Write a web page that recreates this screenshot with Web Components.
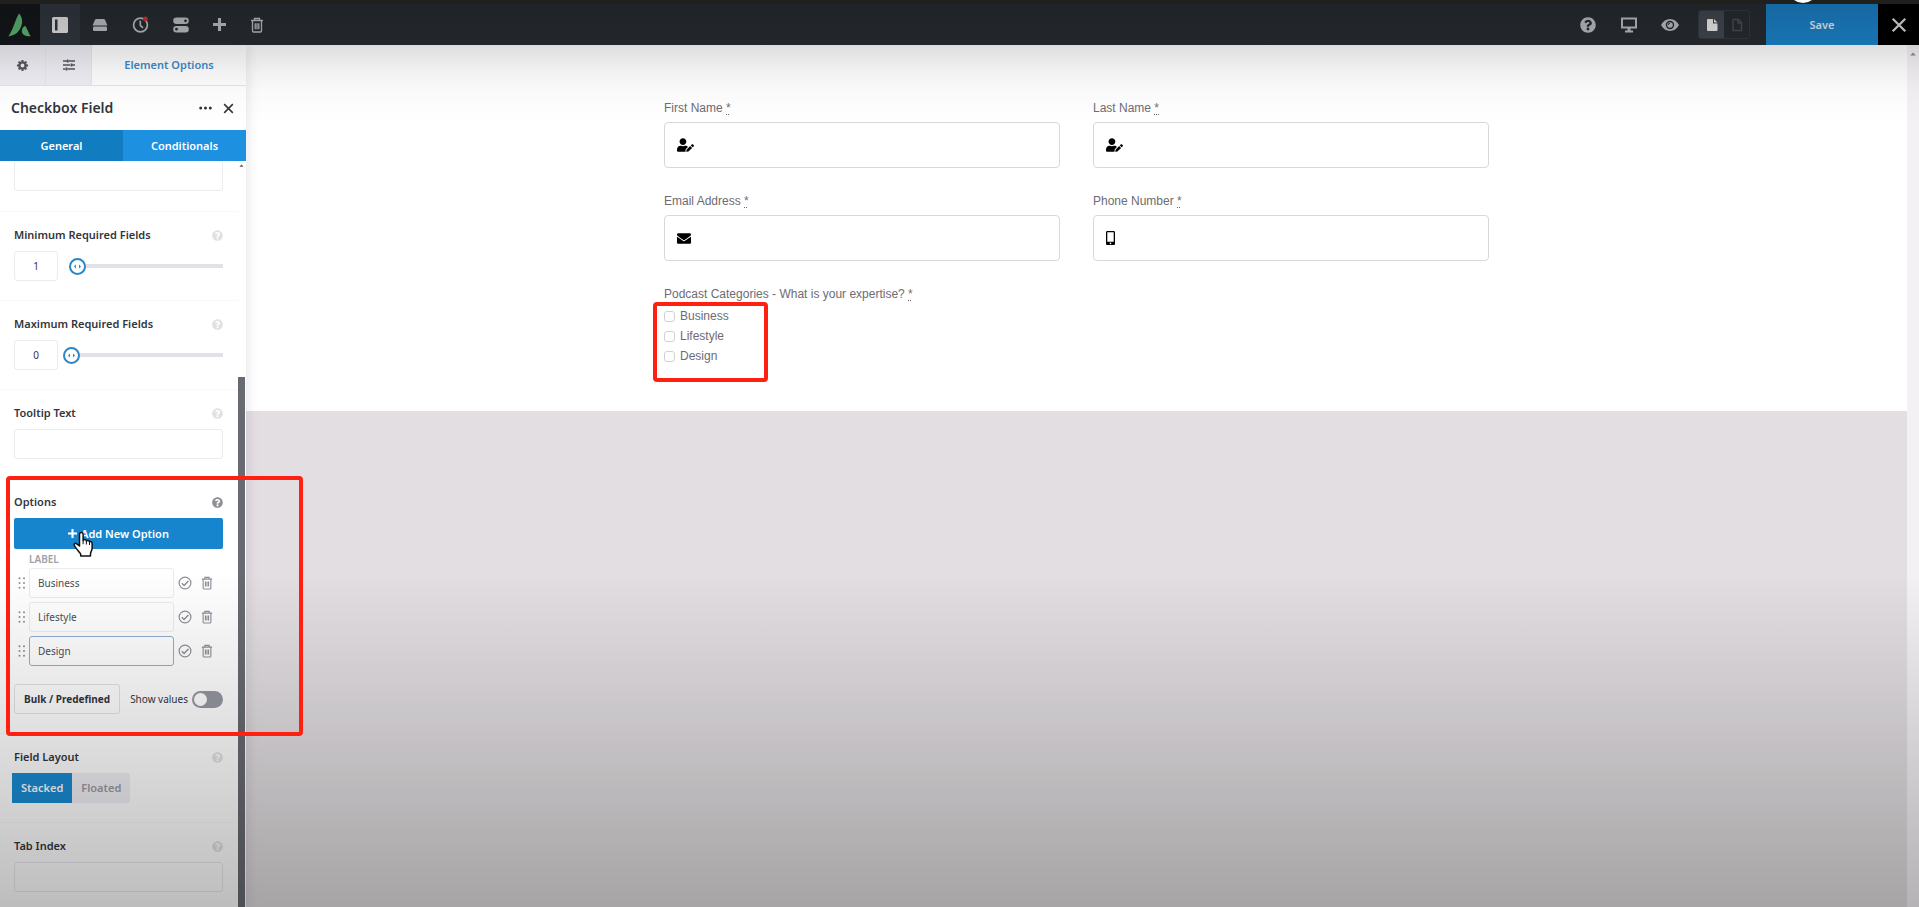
<!DOCTYPE html>
<html lang="en">
<head>
<meta charset="utf-8">
<title>Avada Live</title>
<style>
html, body { height: 100%; }
body {
  margin: 0;
  overflow: hidden;
  font-family: "Noto Sans", "Open Sans", sans-serif;
  font-size: 11px;
  line-height: 18px;
  color: #33353d;
}
</style>
</head>
<body>
<live-builder></live-builder>

<script>
const RESET = `
  *, *::before, *::after { box-sizing: border-box; }
  button, input { font: inherit; color: inherit; margin: 0; }
  button { border: 0; padding: 0; background: none; cursor: pointer; white-space: nowrap; }
  h2, h3 { margin: 0; font: inherit; font-weight: 600; }
`;

const ICONS = {
  logo: ['0 0 24 24', '<path fill="#5cb572" d="M11.200.5C13.800 3.500 15 8 13.500 12.600 11.700 18.100 8 22.600.3 23.400 3.600 18.800 5.800 12.500 7.400 8.200 8.500 5 9.800 2.500 11.200.5zM16.900 12.700c2.400 2 3.300 7.400 6 10.600-5.800.4-9.300-2-9.100-5.600.1-2.100 1.500-4 3.100-5z"/>'],
  panel: ['0 0 16 16', '<path fill="currentColor" fill-rule="evenodd" d="M1.500 0h13A1.500 1.500 0 0 1 16 1.500v13a1.500 1.500 0 0 1-1.500 1.500h-13A1.500 1.500 0 0 1 0 14.500v-13A1.500 1.500 0 0 1 1.500 0zM3 2.500v11h2.500v-11z"/>'],
  drive: ['0 0 16 16', '<path fill="currentColor" d="M4.400 2h7.200c.7 0 1.200.4 1.500 1l2.300 5.500H.6L2.900 3c.3-.6.800-1 1.500-1z"/><rect fill="currentColor" x="1" y="9.500" width="14" height="4.500" rx="1.200"/>'],
  clock: ['0 0 16 16', '<circle cx="8" cy="8.500" r="6.500" fill="none" stroke="currentColor" stroke-width="1.600"/><path d="M7.800 4.500v4.300l2.500 2.400" fill="none" stroke="currentColor" stroke-width="1.500"/><circle cx="12.600" cy="2.800" r="2.300" fill="#c9363b"/>'],
  toggles: ['0 0 16 16', '<path fill="currentColor" fill-rule="evenodd" d="M3.500.5h9a3.300 3.300 0 0 1 0 6.600h-9a3.300 3.300 0 0 1 0-6.600zm9 1.900a1.400 1.400 0 1 0 0 2.800 1.400 1.400 0 0 0 0-2.800zM3.500 8.900h9a3.300 3.300 0 0 1 0 6.600h-9a3.300 3.300 0 0 1 0-6.600zm0 1.900a1.400 1.400 0 1 0 0 2.800 1.400 1.400 0 0 0 0-2.800z"/>'],
  plus: ['0 0 12 12', '<path fill="currentColor" d="M4.600 0h2.800v4.600H12v2.800H7.400V12H4.600V7.400H0V4.600h4.600z"/>'],
  trash: ['0 0 14 16', '<path d="M1 3.500h12M4.500 3.500v-2h5v2M2.500 3.500v10.200c0 .7.500 1.300 1.200 1.300h6.600c.7 0 1.200-.6 1.200-1.300V3.500M5.200 6.200v6M7 6.200v6M8.800 6.200v6" fill="none" stroke="currentColor" stroke-width="1.300"/>'],
  help: ['0 0 512 512', '<path fill="currentColor" d="M504 256c0 137-111 248-248 248S8 393 8 256C8 119 119 8 256 8s248 111 248 248zM262.700 90c-54.500 0-89.300 23-116.600 63.800-3.500 5.200-2.300 12.400 2.700 16.200l34.700 26.300c5.200 4 12.600 3 16.700-2.100 17.900-22.700 30.100-35.800 57.300-35.800 20.400 0 45.700 13.100 45.700 33 0 15-12.400 22.600-32.500 33.900C247.100 238.500 216 255 216 296v4c0 6.600 5.400 12 12 12h56c6.600 0 12-5.400 12-12v-1.300c0-28.500 83.200-29.700 83.200-106.700 0-58-60.200-102-116.500-102zM256 338c-25.400 0-46 20.600-46 46s20.600 46 46 46 46-20.600 46-46-20.600-46-46-46z"/>'],
  desktop: ['0 0 18 16', '<path fill="none" stroke="currentColor" stroke-width="2" d="M2 1.500h14v9H2z"/><path fill="currentColor" d="M7.500 11h3v2.500H13V15.500H5V13.500h2.500z"/>'],
  eye: ['0 0 18 14', '<path fill="currentColor" fill-rule="evenodd" d="M9 1c3.800 0 7 2.300 9 6-2 3.700-5.200 6-9 6S2 10.700 0 7c2-3.700 5.200-6 9-6zm0 1.800a4.200 4.200 0 1 0 0 8.400 4.200 4.200 0 0 0 0-8.400z"/><circle cx="9" cy="7" r="2.800" fill="currentColor"/><path d="M7.300 6.800A1.700 1.700 0 0 1 9 5.200" stroke="#24282c" fill="none"/>'],
  page: ['0 0 12 14', '<path fill="currentColor" d="M2 1h5v4.500h4.500V12a1 1 0 0 1-1 1H2a1 1 0 0 1-1-1V2a1 1 0 0 1 1-1zM8 1l3.500 3.500H8z"/>'],
  pageLine: ['0 0 12 14', '<path fill="none" stroke="currentColor" stroke-width="1.500" d="M2 1.500h5.500l3 3V12.500H2zM7 1.500v3.500h3.500"/>'],
  close: ['0 0 14 14', '<path d="M1.500 1.500l11 11m0-11l-11 11" fill="none" stroke="currentColor" stroke-width="2"/>'],
  gear: ['0 0 14 14', '<circle cx="7" cy="7" r="3.400" fill="none" stroke="currentColor" stroke-width="2.600"/><path stroke="currentColor" stroke-width="2.200" d="M7 1v2M7 11v2M1 7h2M11 7h2M2.800 2.800l1.300 1.300M9.900 9.900l1.300 1.300M2.800 11.200l1.300-1.300M9.900 4.100l1.300-1.300"/>'],
  sliders: ['0 0 14 12', '<path fill="none" stroke="currentColor" stroke-width="1.300" d="M1 2h4M7 2h6M1 6h7M10 6h3M1 10h2.500M5.500 10H13"/><path stroke="currentColor" stroke-width="1.800" d="M5.800.5v3M9.500 4.500v3M4.500 8.500v3"/>'],
  dots: ['0 0 13 4', '<g fill="currentColor"><circle cx="1.700" cy="2" r="1.500"/><circle cx="6.500" cy="2" r="1.500"/><circle cx="11.300" cy="2" r="1.500"/></g>'],
  grip: ['0 0 8 12', '<g fill="currentColor"><circle cx="1.500" cy="1.200" r="1"/><circle cx="6" cy="1.200" r="1"/><circle cx="1.500" cy="6" r="1"/><circle cx="6" cy="6" r="1"/><circle cx="1.500" cy="10.800" r="1"/><circle cx="6" cy="10.800" r="1"/></g>'],
  check: ['0 0 14 14', '<circle cx="7" cy="7" r="5.900" fill="none" stroke="currentColor" stroke-width="1.200"/><path d="M3.800 7.200l2.300 2.300 4.300-4.500" fill="none" stroke="currentColor" stroke-width="1.500"/>'],
  up: ['0 0 6 4', '<path fill="currentColor" d="M3 .5L5.800 3.500H.2z"/>'],
  user: ['0 0 640 512', '<path fill="currentColor" d="M224 256c70.700 0 128-57.300 128-128S294.700 0 224 0 96 57.300 96 128s57.300 128 128 128zm89.600 32h-16.700c-22.200 10.200-46.900 16-72.900 16s-50.600-5.800-72.900-16h-16.700C60.200 288 0 348.200 0 422.400V464c0 26.500 21.500 48 48 48h274.900c-2.400-6.800-3.400-14-2.600-21.300l6.800-60.900 1.200-11.100 7.900-7.900 77.300-77.300c-24.500-27.700-60-45.500-99.900-45.500zm45.300 145.300l-6.800 61c-1.100 10.200 7.500 18.800 17.600 17.600l60.900-6.800 137.900-137.900-71.700-71.700zM633 268.900L595.100 231c-9.300-9.300-24.500-9.300-33.800 0l-41.900 41.900 71.800 71.700 41.800-41.800c9.300-9.400 9.300-24.500 0-33.900z"/>'],
  mail: ['0 64 512 384', '<path fill="currentColor" d="M502.300 190.800c3.900-3.100 9.700-.2 9.700 4.700V400c0 26.500-21.500 48-48 48H48c-26.500 0-48-21.500-48-48V195.600c0-5 5.700-7.800 9.700-4.700 22.400 17.400 52.100 39.500 154.100 113.600 21.100 15.400 56.700 47.800 92.200 47.600 35.700.3 72-32.800 92.300-47.600 102-74.100 131.600-96.300 154-113.700zM256 320c23.200.4 56.600-29.200 73.400-41.400 132.700-96.300 142.800-104.700 173.400-128.700 5.800-4.500 9.200-11.500 9.200-18.900v-19c0-26.500-21.500-48-48-48H48c-26.500 0-48 21.500-48 48v19c0 7.400 3.400 14.300 9.200 18.900 30.600 23.900 40.700 32.400 173.400 128.700 16.800 12.200 50.200 41.800 73.400 41.400z"/>'],
  phone: ['0 0 9 14', '<path fill="currentColor" fill-rule="evenodd" d="M1.300 0h6.400C8.400 0 9 .6 9 1.300v11.400c0 .7-.6 1.300-1.300 1.300H1.300C.6 14 0 13.400 0 12.700V1.300C0 .6.600 0 1.300 0zm0 1.300v9.400h6.400V1.300zm3.200 10.300a.8.800 0 1 0 0 1.600.8.800 0 0 0 0-1.600z"/>'],
  hand: ['0 0 20 26', '<path fill="#fff" stroke="#111" stroke-width="1.500" stroke-linejoin="round" d="M6.500 15V3.200a1.800 1.800 0 0 1 3.600 0V9.500c.4-1.400 3.200-1.200 3.300.5.700-1 3-.7 3.100.9.800-.7 2.600-.2 2.600 1.500v5.200c0 2.100-1.600 3.300-1.600 5.100V25H7.700v-1.900C6.300 21 3.300 18.100 1.400 14.500c-.9-1.700 1-2.800 2.300-1.600z"/><path d="M10.100 9.500v3.700M13.400 10v3.500M16.500 11v3" stroke="#111" fill="none"/>']
};

class UiIcon extends HTMLElement {
  constructor() {
    super();
    this.attachShadow({ mode: 'open' });
  }

  connectedCallback() {
    const [box, shape] = ICONS[this.getAttribute('name')];
    const w = this.getAttribute('w') || 16;
    const h = this.getAttribute('h') || w;
    this.shadowRoot.innerHTML = `
      <style>
        :host { display: inline-flex; flex: none; }
        svg { display: block; }
      </style>
      <svg viewBox="${box}" width="${w}" height="${h}" aria-hidden="true">${shape}</svg>`;
  }
}
customElements.define('ui-icon', UiIcon);

// red outline drawn over a part of the page
customElements.define('call-out', class extends HTMLElement {
  constructor() {
    super();
    this.attachShadow({ mode: 'open' }).innerHTML = `
      <style>
        :host {
          display: block;
          box-sizing: border-box;
          position: absolute;
          z-index: 6;
          border: 4px solid #ff2012;
          border-radius: 4px;
          pointer-events: none;
        }
      </style>`;
  }
});

customElements.define('top-toolbar', class extends HTMLElement {
  constructor() {
    super();
    this.attachShadow({ mode: 'open' }).innerHTML = `
      <style>
        ${RESET}
        :host {
          display: flex;
          justify-content: space-between;
          height: 45px;
          border-top: 4px solid #282826;
          background: #282d32;
          color: #bfc2c6;
        }
        .group { display: flex; }
        button { padding: 0 12px; display: flex; align-items: center; justify-content: center; }
        .logo { padding: 0 8px; background: #14171a; }
        .active { background: #323841; color: #e6e6e6; }
        .view > button { width: 41px; padding: 0; }
        .status {
          display: flex;
          align-self: center;
          height: 29px;
          margin: 0 16px 0 8px;
          border: 1px solid #363c43;
          border-radius: 3px;
          overflow: hidden;
        }
        .status button { width: 25px; padding: 0; color: #4a5057; }
        .status .on { background: #434951; color: #f2f2f2; }
        .view > .save { width: 112px; background: #1c84cc; color: #e9f2f9; font-weight: 600; }
        .close { background: #000; color: #ddd; }
      </style>
      <div class="group">
        <button class="logo" aria-label="Avada"><ui-icon name="logo" w="24"></ui-icon></button>
        <button class="active" aria-label="Toggle sidebar"><ui-icon name="panel"></ui-icon></button>
        <button aria-label="Library"><ui-icon name="drive"></ui-icon></button>
        <button aria-label="History"><ui-icon name="clock" w="17"></ui-icon></button>
        <button aria-label="Preferences"><ui-icon name="toggles"></ui-icon></button>
        <button aria-label="Add"><ui-icon name="plus" w="13"></ui-icon></button>
        <button aria-label="Clear layout"><ui-icon name="trash" w="14" h="16"></ui-icon></button>
      </div>
      <div class="group view">
        <button aria-label="Help"><ui-icon name="help"></ui-icon></button>
        <button aria-label="Responsive"><ui-icon name="desktop" w="18" h="16"></ui-icon></button>
        <button aria-label="Preview"><ui-icon name="eye" w="18" h="14"></ui-icon></button>
        <div class="status">
          <button class="on" aria-label="Published"><ui-icon name="page" w="12" h="14"></ui-icon></button>
          <button aria-label="Draft"><ui-icon name="pageLine" w="12" h="14"></ui-icon></button>
        </div>
        <button class="save">Save</button>
        <button class="close" aria-label="Close"><ui-icon name="close"></ui-icon></button>
      </div>`;
  }
});

const FIELD = `
  input[type=text] {
    height: 30px;
    min-width: 0;
    border: 1px solid rgba(60, 60, 90, .1);
    border-radius: 3px;
    background: transparent;
    font-size: 10px;
    outline: 0;
  }
`;

customElements.define('option-row', class extends HTMLElement {
  constructor() {
    super();
    this.attachShadow({ mode: 'open' });
  }

  connectedCallback() {
    const label = this.getAttribute('label');
    const type = this.getAttribute('type');
    const value = this.getAttribute('value');
    let control = '<slot></slot>';
    let title = `<h3>${label}</h3>`;

    if (type == 'text') {
      title = `<label for="field">${label}</label>`;
      control = '<input id="field" type="text">';
    }
    if (type == 'range') {
      title = `<label for="field">${label}</label>`;
      control = `
        <div class="range">
          <input id="field" type="text" value="${value}">
          <input type="range" min="0" max="24" value="${value}" aria-label="${label}">
        </div>`;
    }

    this.shadowRoot.innerHTML = `
      <style>
        ${RESET}
        ${FIELD}
        :host {
          display: block;
          padding: 14px 15px 19px 14px;
          border-top: 1px solid rgba(60, 60, 90, .03);
        }
        header { display: flex; align-items: center; justify-content: space-between; margin-bottom: 7px; }
        label, h3 { font-weight: 600; }
        .help { display: flex; color: #e2e0e3; }
        :host([active]) .help { color: #8f9094; }
        input[type=text] { display: block; width: 100%; padding: 0 9px; }
        .range { display: flex; align-items: center; gap: 5px; }
        .range input[type=text] { width: 44px; padding: 0; text-align: center; }
        input[type=range] {
          appearance: none;
          flex: 1;
          min-width: 0;
          height: 17px;
          background: none;
        }
        input[type=range]::-webkit-slider-runnable-track {
          height: 4px;
          background: linear-gradient(90deg, transparent 8px, #e2e1e8 8px);
        }
        input[type=range]::-webkit-slider-thumb {
          appearance: none;
          width: 17px;
          height: 17px;
          margin-top: -6px;
          border: 2px solid #2b86c5;
          border-radius: 50%;
          background: #fff url("data:image/svg+xml,%3Csvg xmlns='http://www.w3.org/2000/svg' viewBox='0 0 13 13'%3E%3Cpath fill='%232b86c5' d='M5 4.500v4L3 6.500zM8 4.500v4l2-2z'/%3E%3C/svg%3E") center / 13px;
        }
      </style>
      <header>
        ${title}
        <button class="help" aria-label="About ${label}"><ui-icon name="help" w="11"></ui-icon></button>
      </header>
      ${control}`;
  }
});

customElements.define('choice-item', class extends HTMLElement {
  constructor() {
    super();
    this.attachShadow({ mode: 'open' });
  }

  connectedCallback() {
    const value = this.getAttribute('value');
    this.shadowRoot.innerHTML = `
      <style>
        ${RESET}
        ${FIELD}
        :host { display: flex; align-items: center; color: #8e8f96; }
        .grip { display: flex; width: 15px; padding-left: 4px; cursor: grab; }
        input[type=text] { flex: 1; padding: 0 8px; color: #4c4d55; }
        :host([focused]) input { border-color: #8fb0cf; }
        button { width: 22px; display: flex; justify-content: center; }
      </style>
      <span class="grip"><ui-icon name="grip" w="8" h="12"></ui-icon></span>
      <input type="text" value="${value}" aria-label="Option label">
      <button aria-label="Select ${value} by default"><ui-icon name="check" w="14"></ui-icon></button>
      <button aria-label="Delete ${value}"><ui-icon name="trash" w="12" h="14"></ui-icon></button>`;
  }
});

customElements.define('choice-editor', class extends HTMLElement {
  constructor() {
    super();
    this.attachShadow({ mode: 'open' }).innerHTML = `
      <style>
        ${RESET}
        :host { display: block; }
        .add {
          display: flex;
          align-items: center;
          justify-content: center;
          gap: 4px;
          width: 100%;
          height: 31px;
          border-radius: 2px;
          background: #1685cd;
          color: #fff;
          font-weight: 600;
        }
        .caption { margin: 3px 15px 2px; font-size: 10px; line-height: 14px; font-weight: 600; color: #a0a1a8; }
        .list { display: grid; grid-template-columns: minmax(0, 1fr); gap: 4px; padding-right: 5px; }
        footer { display: flex; align-items: center; justify-content: space-between; margin-top: 18px; }
        .bulk { height: 30px; padding: 0 9px; border: 1px solid rgba(60, 60, 90, .14); border-radius: 3px; font-size: 10px; font-weight: 700; }
        .switch { display: flex; align-items: center; gap: 4px; font-size: 10px; white-space: nowrap; }
        .switch input {
          appearance: none;
          width: 31px;
          height: 17px;
          padding: 2px;
          border-radius: 9px;
          background: #9698a1;
        }
        .switch input::before {
          content: "";
          display: block;
          width: 13px;
          height: 13px;
          border-radius: 50%;
          background: #fff;
        }
      </style>
      <button class="add"><ui-icon name="plus" w="9"></ui-icon>Add New Option</button>
      <div class="caption">LABEL</div>
      <div class="list"><slot></slot></div>
      <footer>
        <button class="bulk">Bulk / Predefined</button>
        <label class="switch">Show values <input type="checkbox" role="switch"></label>
      </footer>`;
  }
});

customElements.define('button-set', class extends HTMLElement {
  constructor() {
    super();
    this.attachShadow({ mode: 'open' });
  }

  connectedCallback() {
    const items = this.getAttribute('items').split(',');
    this.shadowRoot.innerHTML = `
      <style>
        ${RESET}
        :host { display: flex; margin-left: -2px; }
        button { height: 30px; padding: 0 9px; background: #f0eff5; color: #9b9ba2; font-weight: 600; }
        button:first-child { border-radius: 3px 0 0 3px; }
        button:last-child { border-radius: 0 3px 3px 0; }
        .on { background: #1a8bd3; color: #fff; }
      </style>
      ${items.map((item, i) => `<button class="${i ? '' : 'on'}" aria-pressed="${!i}">${item}</button>`).join('')}`;
  }
});

customElements.define('side-panel', class extends HTMLElement {
  constructor() {
    super();
    this.attachShadow({ mode: 'open' }).innerHTML = `
      <style>
        ${RESET}
        :host {
          display: flex;
          flex-direction: column;
          flex: none;
          width: 246px;
          background: #fff;
          box-shadow: 0 0 12px rgba(60, 50, 80, .16);
          z-index: 1;
        }
        nav { display: flex; height: 41px; border-bottom: 1px solid #e6e5ea; }
        nav button { width: 46px; display: flex; align-items: center; justify-content: center; background: #f0eff5; color: #55575f; border-right: 1px solid #e8e7ee; }
        nav .current { flex: 1; border: 0; background: #fff; color: #3c89c9; font-weight: 600; }
        .title { display: flex; align-items: center; gap: 11px; height: 44px; padding: 0 12px 0 11px; }
        h2 { flex: 1; font-size: 14px; }
        .title button { display: flex; }
        .tabs { display: flex; height: 31px; }
        .tabs button { flex: 1; background: #1d90df; color: #fff; font-weight: 600; }
        .tabs .on { background: #127cc1; }
        .scroll { flex: 1; min-height: 0; display: flex; }
        .body { flex: 1; min-width: 0; overflow: hidden; }
        .bar { width: 8px; padding-right: 1px; display: flex; flex-direction: column; align-items: center; color: #555; }
        .bar ui-icon { padding-top: 3px; }
        .thumb { width: 7px; height: 71%; margin-top: auto; background: #676a71; }
      </style>
      <nav>
        <button aria-label="Settings"><ui-icon name="gear" w="13"></ui-icon></button>
        <button aria-label="Page options"><ui-icon name="sliders" w="14" h="12"></ui-icon></button>
        <button class="current">Element Options</button>
      </nav>
      <div class="title">
        <h2>Checkbox Field</h2>
        <button aria-label="More"><ui-icon name="dots" w="13" h="4"></ui-icon></button>
        <button aria-label="Close"><ui-icon name="close" w="11"></ui-icon></button>
      </div>
      <div class="tabs"><button class="on">General</button><button>Conditionals</button></div>
      <div class="scroll">
        <div class="body"><slot></slot></div>
        <div class="bar"><ui-icon name="up" w="5" h="3"></ui-icon><div class="thumb"></div></div>
      </div>`;
  }
});

const FORM_LABEL = `
  abbr { text-decoration: underline dotted; text-underline-offset: 2px; }
`;

customElements.define('form-field', class extends HTMLElement {
  constructor() {
    super();
    this.attachShadow({ mode: 'open' });
  }

  connectedCallback() {
    this.shadowRoot.innerHTML = `
      <style>
        ${RESET}
        ${FORM_LABEL}
        :host { display: grid; gap: 5px; }
        .box { position: relative; }
        .box ui-icon { position: absolute; left: 13px; top: 0; height: 46px; align-items: center; color: #000; }
        input { display: block; width: 100%; height: 46px; padding: 0 16px 0 44px; border: 1px solid #d8d8da; border-radius: 4px; background: #fff; }
      </style>
      <label for="field">${this.getAttribute('label')} <abbr title="required">*</abbr></label>
      <div class="box">
        <ui-icon name="${this.getAttribute('icon')}" w="${this.getAttribute('w')}" h="${this.getAttribute('h')}"></ui-icon>
        <input id="field" type="${this.getAttribute('type')}" required>
      </div>`;
  }
});

customElements.define('checkbox-group', class extends HTMLElement {
  constructor() {
    super();
    this.attachShadow({ mode: 'open' });
  }

  connectedCallback() {
    const items = this.getAttribute('items').split(',');
    this.shadowRoot.innerHTML = `
      <style>
        ${RESET}
        ${FORM_LABEL}
        :host { display: block; }
        fieldset { margin: 0; padding: 0; border: 0; min-width: 0; }
        legend { padding: 0; }
        .items { position: relative; margin-top: 3px; }
        call-out { left: -11px; top: -4px; width: 115px; height: 80px; }
        label { display: flex; align-items: center; gap: 5px; height: 20px; }
        input { appearance: none; width: 11px; height: 11px; border: 1px solid #d2d2d6; border-radius: 3px; background: #fff; }
        input:checked { background: #1a8bd3; }
      </style>
      <fieldset>
        <legend>${this.getAttribute('label')} <abbr title="required">*</abbr></legend>
        <div class="items">
          ${items.map(item => `<label><input type="checkbox" value="${item}">${item}</label>`).join('')}
          <call-out></call-out>
        </div>
      </fieldset>`;
  }
});

customElements.define('page-canvas', class extends HTMLElement {
  constructor() {
    super();
    this.attachShadow({ mode: 'open' }).innerHTML = `
      <style>
        ${RESET}
        :host { display: flex; flex: 1; min-width: 0; background: #e2dee1; }
        .page { flex: 1; min-width: 0; }
        section { padding: 54px 24px 45px; background: #fff; }
        form {
          display: grid;
          grid-template-columns: 1fr 1fr;
          gap: 24px 33px;
          max-width: 825px;
          margin: 0 auto;
          font-family: "Liberation Sans", Arial, sans-serif;
          font-size: 12px;
          color: #6e6b72;
        }
        .bar { width: 12px; padding-top: 5px; background: #f3f1f4; color: #8a8a8e; text-align: center; line-height: 4px; }
      </style>
      <div class="page"><section><form><slot></slot></form></section></div>
      <div class="bar"><ui-icon name="up" w="6" h="4"></ui-icon></div>`;
  }
});

customElements.define('live-builder', class extends HTMLElement {
  constructor() {
    super();
    this.attachShadow({ mode: 'open' }).innerHTML = `
      <style>
        ${RESET}
        :host { display: flex; flex-direction: column; position: relative; height: 100vh; overflow: hidden; }
        main { display: flex; flex: 1; min-height: 0; }
        .clip { display: block; padding: 0 15px 20px 14px; }
        .clip input {
          display: block;
          width: 100%;
          height: 30px;
          border: 1px solid #ececf0;
          border-top: 0;
          border-radius: 3px;
        }
        .wide { grid-column: 1 / -1; }
        .shade {
          position: absolute;
          inset: 0;
          z-index: 5;
          pointer-events: none;
          background:
            linear-gradient(rgba(0, 0, 0, .22), rgba(0, 0, 0, .13) 45px, rgba(0, 0, 0, .06) 70px, rgba(0, 0, 0, .02) 92px, transparent 122px),
            linear-gradient(transparent 63%, rgba(0, 0, 0, .26));
        }
        .knob {
          position: absolute;
          top: -27px;
          right: 101px;
          width: 30px;
          height: 30px;
          border-radius: 50%;
          background: #fff;
          z-index: 6;
        }
        .options-mark { left: 6px; top: 476px; width: 297px; height: 260px; }
        .pointer { position: absolute; left: 73px; top: 531px; z-index: 7; pointer-events: none; }
      </style>
      <top-toolbar></top-toolbar>
      <main>
        <side-panel>
          <div class="clip"><input type="text" aria-label="Field value"></div>
          <option-row label="Minimum Required Fields" type="range" value="1"></option-row>
          <option-row label="Maximum Required Fields" type="range" value="0"></option-row>
          <option-row label="Tooltip Text" type="text"></option-row>
          <option-row label="Options" active>
            <choice-editor>
              <choice-item value="Business"></choice-item>
              <choice-item value="Lifestyle"></choice-item>
              <choice-item value="Design" focused></choice-item>
            </choice-editor>
          </option-row>
          <option-row label="Field Layout"><button-set items="Stacked,Floated"></button-set></option-row>
          <option-row label="Tab Index" type="text"></option-row>
        </side-panel>
        <page-canvas>
          <form-field label="First Name" type="text" icon="user" w="17" h="14"></form-field>
          <form-field label="Last Name" type="text" icon="user" w="17" h="14"></form-field>
          <form-field label="Email Address" type="email" icon="mail" w="14" h="11"></form-field>
          <form-field label="Phone Number" type="tel" icon="phone" w="9" h="14"></form-field>
          <checkbox-group class="wide" label="Podcast Categories - What is your expertise?" items="Business,Lifestyle,Design"></checkbox-group>
        </page-canvas>
      </main>
      <div class="shade"></div>
      <div class="knob"></div>
      <call-out class="options-mark"></call-out>
      <ui-icon class="pointer" name="hand" w="20" h="26"></ui-icon>`;
  }
});
</script>
</body>
</html>
